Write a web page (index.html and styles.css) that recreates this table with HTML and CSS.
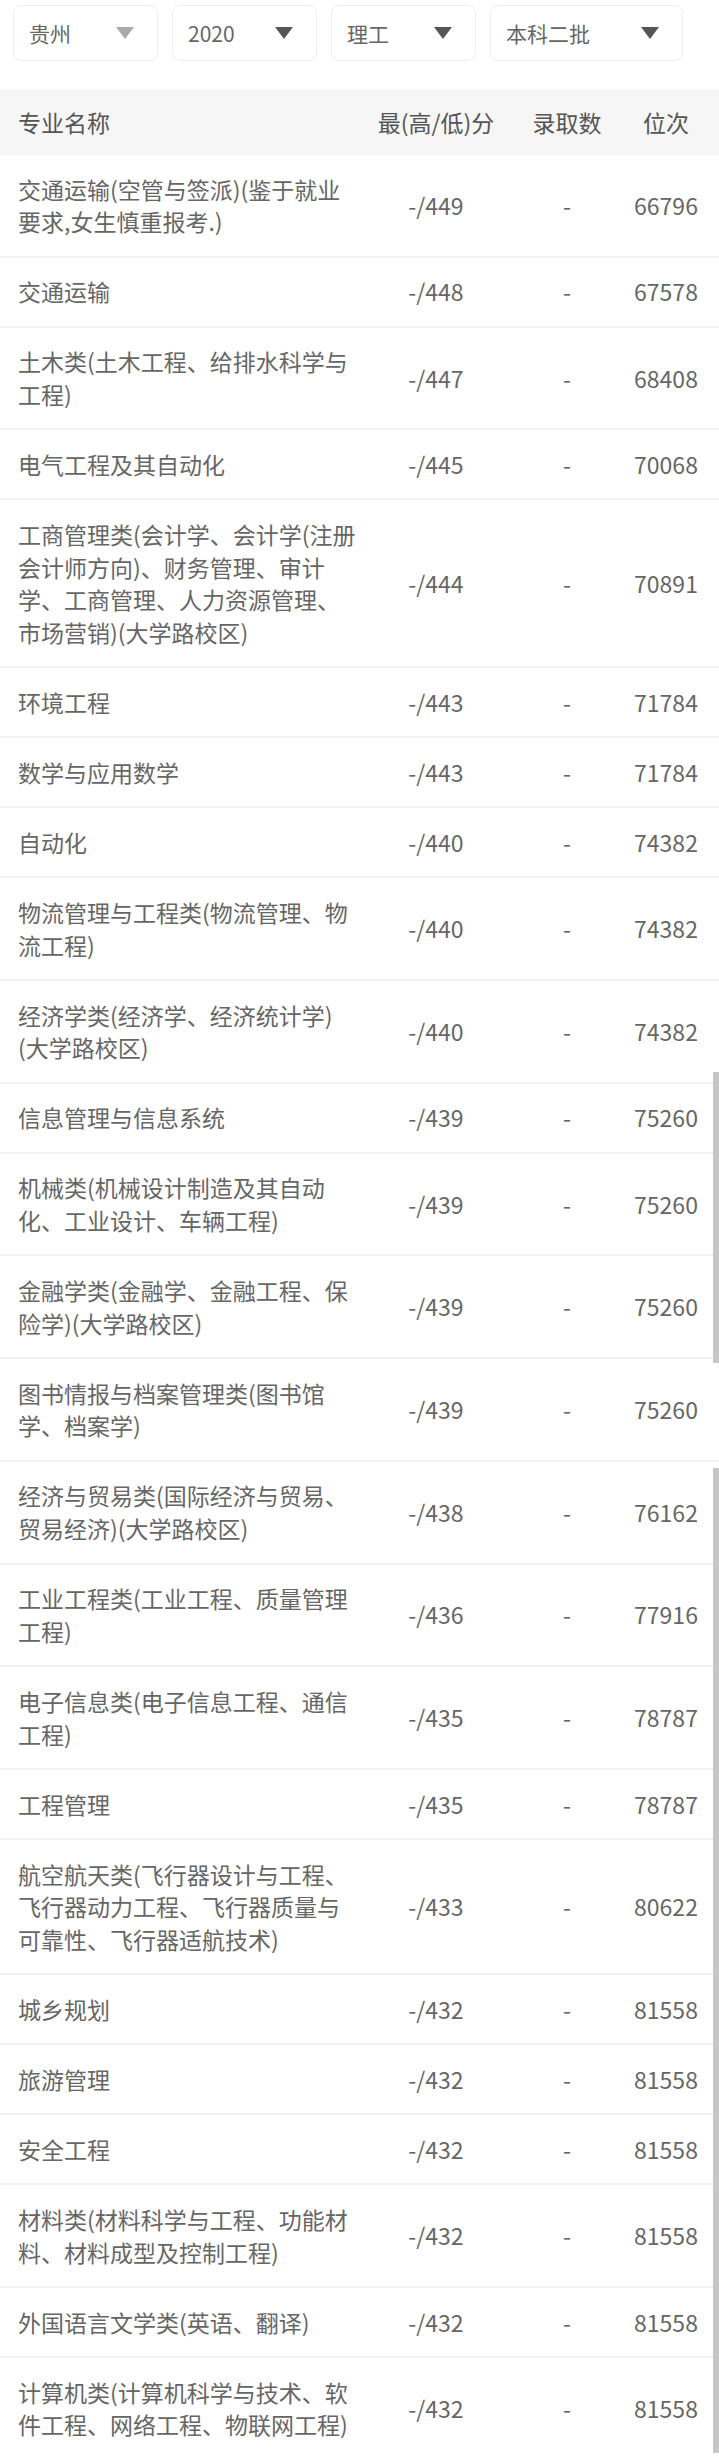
FILE: index.html
```html
<!DOCTYPE html>
<html lang="zh">
<head>
<meta charset="utf-8">
<title>专业分数线</title>
<link rel="stylesheet" href="styles.css">
</head>
<body>
<div class="page">
  <div class="filters">
    <div class="select select-a"><span>贵州</span><i class="caret caret-light"></i></div>
    <div class="select select-b"><span>2020</span><i class="caret"></i></div>
    <div class="select select-c"><span>理工</span><i class="caret"></i></div>
    <div class="select select-d"><span>本科二批</span><i class="caret"></i></div>
  </div>

  <div class="table">
    <div class="row head">
      <div class="name">专业名称</div><div class="cell">最(高/低)分</div><div class="cell">录取数</div><div class="cell">位次</div>
    </div>
    <div class="row"><div class="name">交通运输(空管与签派)(鉴于就业要求,女生慎重报考.)</div><div class="cell">-/449</div><div class="cell">-</div><div class="cell">66796</div></div>
    <div class="row"><div class="name">交通运输</div><div class="cell">-/448</div><div class="cell">-</div><div class="cell">67578</div></div>
    <div class="row"><div class="name">土木类(土木工程、给排水科学与工程)</div><div class="cell">-/447</div><div class="cell">-</div><div class="cell">68408</div></div>
    <div class="row"><div class="name">电气工程及其自动化</div><div class="cell">-/445</div><div class="cell">-</div><div class="cell">70068</div></div>
    <div class="row"><div class="name">工商管理类(会计学、会计学(注册会计师方向)、财务管理、审计学、工商管理、人力资源管理、市场营销)(大学路校区)</div><div class="cell">-/444</div><div class="cell">-</div><div class="cell">70891</div></div>
    <div class="row"><div class="name">环境工程</div><div class="cell">-/443</div><div class="cell">-</div><div class="cell">71784</div></div>
    <div class="row"><div class="name">数学与应用数学</div><div class="cell">-/443</div><div class="cell">-</div><div class="cell">71784</div></div>
    <div class="row"><div class="name">自动化</div><div class="cell">-/440</div><div class="cell">-</div><div class="cell">74382</div></div>
    <div class="row"><div class="name">物流管理与工程类(物流管理、物流工程)</div><div class="cell">-/440</div><div class="cell">-</div><div class="cell">74382</div></div>
    <div class="row"><div class="name">经济学类(经济学、经济统计学)(大学路校区)</div><div class="cell">-/440</div><div class="cell">-</div><div class="cell">74382</div></div>
    <div class="row"><div class="name">信息管理与信息系统</div><div class="cell">-/439</div><div class="cell">-</div><div class="cell">75260</div></div>
    <div class="row"><div class="name">机械类(机械设计制造及其自动化、工业设计、车辆工程)</div><div class="cell">-/439</div><div class="cell">-</div><div class="cell">75260</div></div>
    <div class="row"><div class="name">金融学类(金融学、金融工程、保险学)(大学路校区)</div><div class="cell">-/439</div><div class="cell">-</div><div class="cell">75260</div></div>
    <div class="row"><div class="name">图书情报与档案管理类(图书馆学、档案学)</div><div class="cell">-/439</div><div class="cell">-</div><div class="cell">75260</div></div>
    <div class="row"><div class="name">经济与贸易类(国际经济与贸易、贸易经济)(大学路校区)</div><div class="cell">-/438</div><div class="cell">-</div><div class="cell">76162</div></div>
    <div class="row"><div class="name">工业工程类(工业工程、质量管理工程)</div><div class="cell">-/436</div><div class="cell">-</div><div class="cell">77916</div></div>
    <div class="row"><div class="name">电子信息类(电子信息工程、通信工程)</div><div class="cell">-/435</div><div class="cell">-</div><div class="cell">78787</div></div>
    <div class="row"><div class="name">工程管理</div><div class="cell">-/435</div><div class="cell">-</div><div class="cell">78787</div></div>
    <div class="row"><div class="name">航空航天类(飞行器设计与工程、飞行器动力工程、飞行器质量与可靠性、飞行器适航技术)</div><div class="cell">-/433</div><div class="cell">-</div><div class="cell">80622</div></div>
    <div class="row"><div class="name">城乡规划</div><div class="cell">-/432</div><div class="cell">-</div><div class="cell">81558</div></div>
    <div class="row"><div class="name">旅游管理</div><div class="cell">-/432</div><div class="cell">-</div><div class="cell">81558</div></div>
    <div class="row"><div class="name">安全工程</div><div class="cell">-/432</div><div class="cell">-</div><div class="cell">81558</div></div>
    <div class="row"><div class="name">材料类(材料科学与工程、功能材料、材料成型及控制工程)</div><div class="cell">-/432</div><div class="cell">-</div><div class="cell">81558</div></div>
    <div class="row"><div class="name">外国语言文学类(英语、翻译)</div><div class="cell">-/432</div><div class="cell">-</div><div class="cell">81558</div></div>
    <div class="row"><div class="name">计算机类(计算机科学与技术、软件工程、网络工程、物联网工程)</div><div class="cell">-/432</div><div class="cell">-</div><div class="cell">81558</div></div>
  </div>

  <div class="scrollbar scrollbar-1"></div>
  <div class="scrollbar scrollbar-2"></div>
</div>
</body>
</html>
```

FILE: styles.css
```css
html, body {
  margin: 0;
  padding: 0;
  background: #ffffff;
}
body {
  font-family: "Noto Sans CJK SC", "Noto Sans", sans-serif;
  color: #666666;
}
.page {
  position: relative;
  width: 719px;
  height: 2457px;
  overflow: hidden;
}
.filters {
  display: flex;
  gap: 14px;
  padding: 5px 0 0 13px;
  height: 56px;
}
.select {
  box-sizing: border-box;
  height: 56px;
  border: 1px solid #eeeeee;
  border-radius: 8px;
  display: flex;
  align-items: center;
  justify-content: space-between;
  padding: 0 23px 0 15px;
  font-size: 21px;
  color: #666666;
  background: #ffffff;
}
.select-a { width: 145px; }
.select-b { width: 145px; }
.select-c { width: 145px; }
.select-d { width: 193px; }
.caret {
  width: 0;
  height: 0;
  border-left: 9px solid transparent;
  border-right: 9px solid transparent;
  border-top: 12px solid #555555;
}
.caret-light {
  border-top-color: #aaaaaa;
}
.table {
  margin-top: 28px;
}
.row {
  display: grid;
  grid-template-columns: 359px 154px 108px 90px;
  align-items: center;
  padding: 17.65px 0;
  border-bottom: 2px solid #f3f3f3;
  font-size: 23px;
  line-height: 32.7px;
  color: #666666;
}
.row.head {
  background: #f6f6f6;
  border-bottom: none;
  padding: 0;
  height: 66px;
  color: #555555;
}
.name {
  padding-left: 18px;
}
.cell {
  text-align: center;
}
.scrollbar {
  position: absolute;
  right: 0;
  width: 6px;
  background: #c6c6c6;
}
.scrollbar-1 {
  top: 1072px;
  height: 291px;
}
.scrollbar-2 {
  top: 1468px;
  height: 985px;
}
```
